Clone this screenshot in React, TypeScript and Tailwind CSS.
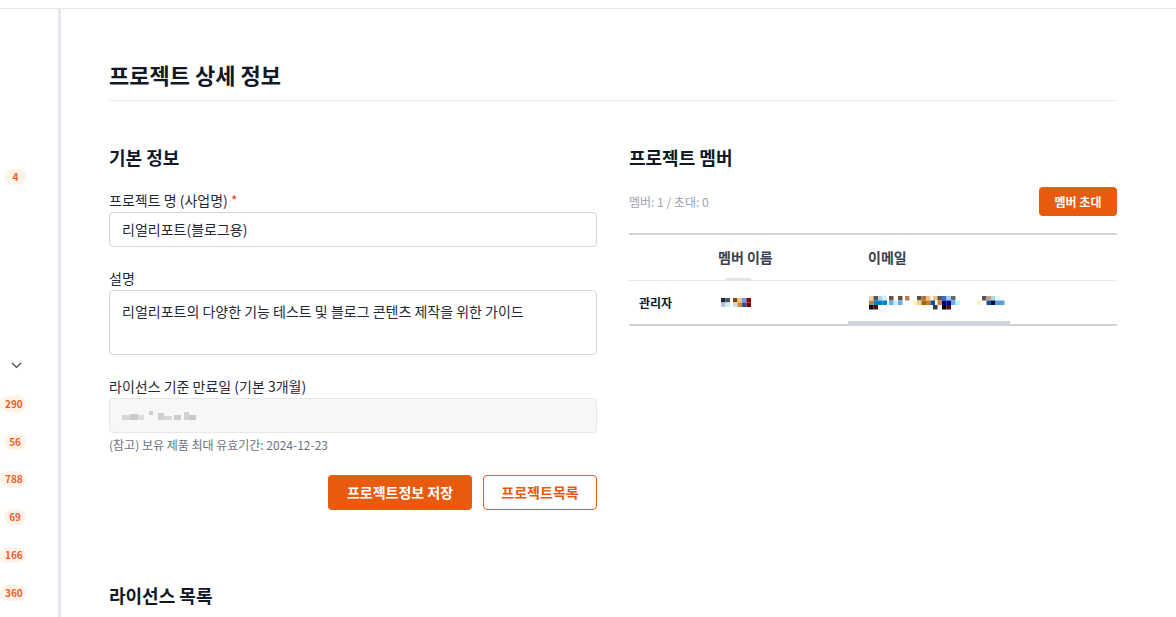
import React from "react";

const font = { fontFamily: '"Noto Sans CJK KR", "Noto Sans", sans-serif' };

function Badge({ n }: { n: string }) {
  return (
    <span className="h-4 min-w-[21px] px-[5px] rounded-full bg-[#fff2e6] text-[#ef5f2a] text-[10px] font-semibold leading-4 text-center">
      {n}
    </span>
  );
}

function Sidebar() {
  const rows: (string | null)[] = [null, null, null, "4", null, null, null, null, "v", "290", "56", "788", "69", "166", "360"];
  return (
    <aside className="w-[61px] shrink-0 overflow-hidden border-r-[3px] border-[#e5e9ee] pt-[35.7px]">
      {rows.map((r, i) => (
        <div key={i} className="h-[37.8px] flex items-center justify-end pr-[32px]">
          {r === "v" ? (
            <svg width="11" height="7" viewBox="0 0 11 7" className="mr-[4px]">
              <path d="M1 1l4.5 4.5L10 1" fill="none" stroke="#374151" strokeWidth="1.2" />
            </svg>
          ) : r ? (
            <Badge n={r} />
          ) : null}
        </div>
      ))}
    </aside>
  );
}

// pixelated (censored) placeholders
function Pixels({ cells, w, h }: { cells: [number, number, string][]; w: number; h: number }) {
  return (
    <svg width={w} height={h} viewBox={`0 0 ${w} ${h}`}>
      {cells.map(([x, y, c], i) => (
        <rect key={i} x={x} y={y} width="4.5" height="4.5" fill={c} />
      ))}
    </svg>
  );
}

const nameCells: [number, number, string][] = [
  [0, 0, "#1f2937"], [4.5, 0, "#4b5563"], [12, 0, "#8b4513"], [16.5, 0, "#f0c080"], [21, 0, "#60a5e0"], [25.5, 0, "#8b0000"],
  [0, 4.5, "#b0c4de"], [4.5, 4.5, "#d0f0f8"], [12, 4.5, "#d8d8d8"], [16.5, 4.5, "#c89040"], [21, 4.5, "#3050a0"], [25.5, 4.5, "#800000"],
];

const emailCells: [number, number, string][] = [
  [0, 0, "#f5d0a0"], [4.5, 0, "#555"], [9, 0, "#a8d8f0"], [13.5, 0, "#d0f0f8"], [20, 0, "#6b5040"], [29, 0, "#6b5040"], [36, 0, "#b08060"],
  [48, 0, "#555"], [52.5, 0, "#b07040"], [57, 0, "#f0c080"], [64, 0, "#f0c080"], [68.5, 0, "#555"], [73, 0, "#3070c0"], [77.5, 0, "#a0d0f0"], [82, 0, "#666"],
  [113, 0, "#555"], [117.5, 0, "#c8a080"], [122, 0, "#a8d8e0"], [126.5, 0, "#e0f8f0"],
  [0, 4.5, "#c08040"], [4.5, 4.5, "#0080c0"], [9, 4.5, "#0080c0"], [13.5, 4.5, "#0080c0"], [20, 4.5, "#60b0f0"], [25, 4.5, "#d0f0f8"], [29, 4.5, "#60b0f0"],
  [44, 4.5, "#fff0c0"], [48, 4.5, "#f0d090"], [52.5, 4.5, "#b06000"], [57, 4.5, "#c08020"], [61.5, 4.5, "#1050a0"], [68.5, 4.5, "#d08040"], [73, 4.5, "#000080"], [77.5, 4.5, "#000080"], [82, 4.5, "#60b0f0"], [86.5, 4.5, "#c0f0f8"],
  [108, 4.5, "#fff0c0"], [117.5, 4.5, "#1050a0"], [122, 4.5, "#001040"], [126.5, 4.5, "#50a0e0"], [131, 4.5, "#50a0e0"],
  [0, 9, "#000030"], [4.5, 9, "#501000"], [64, 9, "#304040"], [73, 9, "#000020"], [77.5, 9, "#501000"],
];

function Field({ label, required, children }: { label: string; required?: boolean; children: React.ReactNode }) {
  return (
    <div className="flex flex-col">
      <label className="text-[14px] leading-5 text-[#1f2937] mb-[2px]">
        {label}
        {required && <span className="text-[#ef4444]"> *</span>}
      </label>
      {children}
    </div>
  );
}

export default function App() {
  return (
    <div className="w-[1176px] h-[617px] overflow-hidden bg-white flex flex-col" style={font}>
      <div className="h-[9px] shrink-0 border-b border-[#e5e9ee]" />
      <div className="flex flex-1 min-h-0">
        <Sidebar />
        <main className="flex-1 pl-12 pt-[49px] pr-[59px]">
          <h1 className="text-[22px] leading-8 font-semibold text-[#111827] pb-[10px] border-b border-[#e8eaed]">
            프로젝트 상세 정보
          </h1>

          <div className="grid grid-cols-2 gap-8 mt-[42px]">
            {/* left column */}
            <section>
              <h2 className="text-[18px] leading-7 font-bold text-[#111827]">기본 정보</h2>
              <div className="mt-[19px] flex flex-col gap-[21px]">
                <Field label="프로젝트 명 (사업명)" required>
                  <div className="h-[35px] rounded-[4px] border border-[#d1d5db] px-3 flex items-center text-[14px] text-[#1f2937]">
                    리얼리포트(블로그용)
                  </div>
                </Field>
                <Field label="설명">
                  <div className="h-[65px] rounded-[4px] border border-[#d1d5db] px-3 pt-[10px] text-[14px] leading-5 text-[#1f2937]">
                    리얼리포트의 다양한 기능 테스트 및 블로그 콘텐츠 제작을 위한 가이드
                  </div>
                </Field>
                <div className="flex flex-col">
                  <Field label="라이선스 기준 만료일 (기본 3개월)">
                    <div className="h-[35px] rounded-[4px] border border-[#e5e7eb] bg-[#f6f7f9] px-3 flex items-center">
                      <svg width="76" height="12" viewBox="0 0 76 12">
                        <rect x="0" y="5" width="8" height="5" fill="#d6d6d6" />
                        <rect x="8" y="4" width="8" height="6" fill="#c8c8c8" />
                        <rect x="16" y="5" width="6" height="5" fill="#dcdcdc" />
                        <rect x="27" y="1" width="4" height="4" fill="#d0d0d0" />
                        <rect x="36" y="3" width="6" height="7" fill="#cfcfcf" />
                        <rect x="42" y="6" width="8" height="4" fill="#d8d8d8" />
                        <rect x="52" y="5" width="7" height="5" fill="#cccccc" />
                        <rect x="62" y="2" width="5" height="8" fill="#d2d2d2" />
                        <rect x="67" y="5" width="7" height="5" fill="#c8c8c8" />
                      </svg>
                    </div>
                  </Field>
                  <p className="mt-1 text-[12px] leading-4 text-[#6b7280]">(참고) 보유 제품 최대 유효기간: 2024-12-23</p>
                </div>
              </div>
              <div className="mt-[22px] flex justify-end gap-[11px]">
                <button className="h-[35px] w-[144px] rounded-[4px] bg-[#e85a0d] text-white text-[14px] font-bold">
                  프로젝트정보 저장
                </button>
                <button className="h-[35px] w-[114px] rounded-[4px] border border-[#e85a0d] bg-white text-[#e85a0d] text-[14px] font-semibold">
                  프로젝트목록
                </button>
              </div>
              <h2 className="mt-[71px] text-[18px] leading-7 font-bold text-[#111827]">라이선스 목록</h2>
            </section>

            {/* right column */}
            <section>
              <h2 className="text-[18px] leading-7 font-bold text-[#111827]">프로젝트 멤버</h2>
              <div className="mt-4 flex items-center justify-between">
                <span className="text-[12px] text-[#9ca3af]">멤버: 1 / 초대: 0</span>
                <button className="h-[29px] w-[78px] rounded-[4px] bg-[#e85a0d] text-white text-[12px] font-bold">
                  멤버 초대
                </button>
              </div>
              <div className="mt-[17px] border-t-2 border-b-2 border-[#d1d5db]">
                <div className="grid grid-cols-[77px_150px_1fr] h-[46px] items-center border-b border-[#e5e7eb] text-[14px] font-semibold text-[#374151]">
                  <div />
                  <div className="px-3 relative">
                    멤버 이름
                    <span className="absolute left-[19px] bottom-[-13px] w-[27px] h-[3px] rounded-t-full bg-[#e2e4e8]" />
                  </div>
                  <div className="px-3">이메일</div>
                </div>
                <div className="grid grid-cols-[77px_150px_1fr] h-[43px] items-center relative">
                  <div className="pl-[10px] text-[12px] font-bold text-[#111827]">관리자</div>
                  <div className="pl-[15px] flex items-center">
                    <Pixels cells={nameCells} w={31} h={9} />
                  </div>
                  <div className="pl-[13px] flex items-center">
                    <Pixels cells={emailCells} w={136} h={14} />
                  </div>
                  <span className="absolute left-[219px] bottom-0 w-[162px] h-[3px] bg-[#d1d5db]" />
                </div>
              </div>
            </section>
          </div>
        </main>
      </div>
    </div>
  );
}
